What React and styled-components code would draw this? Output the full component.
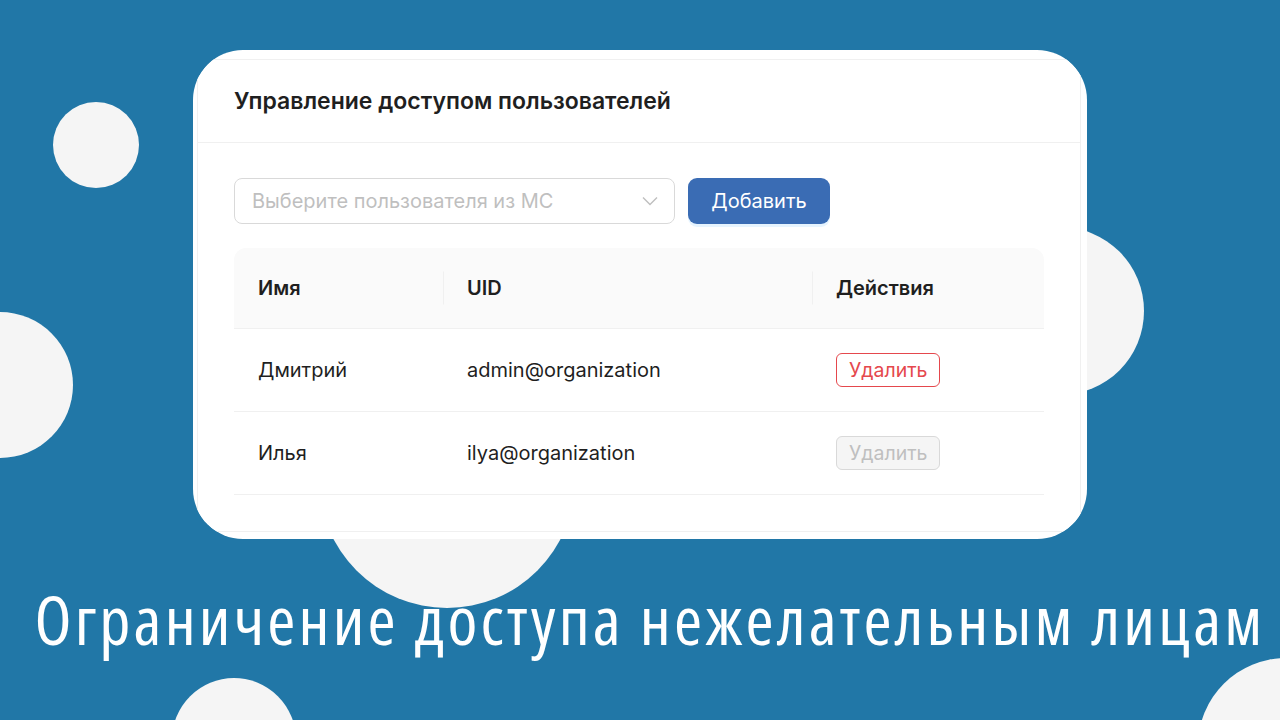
import React from "react";
import styled, { createGlobalStyle } from "styled-components";

const GlobalStyle = createGlobalStyle`
  html, body {
    margin: 0;
    padding: 0;
    background: #2177a7;
  }
  * {
    box-sizing: border-box;
  }
`;

const bubbles = [
  { x: 96, y: 145, r: 43 },
  { x: 0, y: 385, r: 73 },
  { x: 1060, y: 311, r: 84 },
  { x: 447, y: 480, r: 128 },
  { x: 234, y: 740, r: 62 },
  { x: 1286, y: 746, r: 88 },
];

const users = [
  { name: "Дмитрий", uid: "admin@organization", canDelete: true },
  { name: "Илья", uid: "ilya@organization", canDelete: false },
];

export default function App() {
  return (
    <>
      <GlobalStyle />
      <Page>
        {bubbles.map((b, i) => (
          <Bubble
            key={i}
            style={{
              left: b.x - b.r,
              top: b.y - b.r,
              width: b.r * 2,
              height: b.r * 2,
            }}
          />
        ))}

        <Frame>
          <Card>
            <CardHead>
              <CardTitle>Управление доступом пользователей</CardTitle>
            </CardHead>
            <CardBody>
              <Toolbar>
                <Select>
                  <Placeholder>Выберите пользователя из МС</Placeholder>
                  <svg width="16" height="10" viewBox="0 0 16 10">
                    <path
                      d="M1 1.5 L8 8.5 L15 1.5"
                      fill="none"
                      stroke="#bfbfbf"
                      strokeWidth="1.4"
                    />
                  </svg>
                </Select>
                <PrimaryButton>Добавить</PrimaryButton>
              </Toolbar>

              <Table>
                <HeadRow>
                  <HeadCell>Имя</HeadCell>
                  <HeadCell $divider>UID</HeadCell>
                  <HeadCell $divider>Действия</HeadCell>
                </HeadRow>
                {users.map((u) => (
                  <Row key={u.uid}>
                    <Cell>{u.name}</Cell>
                    <Cell>{u.uid}</Cell>
                    <Cell>
                      <DangerButton disabled={!u.canDelete}>Удалить</DangerButton>
                    </Cell>
                  </Row>
                ))}
              </Table>
            </CardBody>
          </Card>
        </Frame>

        <Caption>Ограничение доступа нежелательным лицам</Caption>
      </Page>
    </>
  );
}

const Page = styled.div`
  position: relative;
  width: 1280px;
  height: 720px;
  overflow: hidden;
  background: #2177a7;
  padding-top: 50px;
  font-family: Inter, "Noto Sans", sans-serif;
`;

const Bubble = styled.div`
  position: absolute;
  border-radius: 50%;
  background: #f5f5f5;
`;

const Frame = styled.div`
  position: relative;
  z-index: 1;
  margin-left: 193px;
  width: 894px;
  height: 489px;
  background: #fff;
  border-radius: 50px;
  overflow: hidden;
  padding: 9px 6px 7px 4px;
`;

const Card = styled.div`
  height: 100%;
  border: 1px solid #f0f0f0;
  border-radius: 12px;
  background: #fff;
`;

const CardHead = styled.div`
  height: 83px;
  display: flex;
  align-items: center;
  padding-left: 36px;
  border-bottom: 1px solid #f0f0f0;
`;

const CardTitle = styled.div`
  font-size: 23px;
  font-weight: 600;
  color: #1f1f1f;
`;

const CardBody = styled.div`
  padding: 35px 36px 0 36px;
`;

const Toolbar = styled.div`
  display: flex;
  align-items: center;
  gap: 13px;
`;

const Select = styled.div`
  width: 441px;
  height: 46px;
  border: 1px solid #d9d9d9;
  border-radius: 8px;
  display: flex;
  align-items: center;
  justify-content: space-between;
  padding: 0 16px 0 17px;
`;

const Placeholder = styled.span`
  font-size: 20px;
  color: #bfbfbf;
`;

const PrimaryButton = styled.button`
  width: 142px;
  height: 46px;
  border: none;
  border-radius: 9px;
  background: #3a6cb4;
  color: #fff;
  font-family: inherit;
  font-size: 20px;
  box-shadow: 0 3px 0 rgba(5, 145, 255, 0.1);
`;

const Table = styled.div`
  margin-top: 24px;
  width: 810px;
`;

const grid = `
  display: grid;
  grid-template-columns: 209px 369px 232px;
`;

const HeadRow = styled.div`
  ${grid}
  height: 81px;
  background: #fafafa;
  border-radius: 12px 12px 0 0;
  border-bottom: 1px solid #f0f0f0;
`;

const HeadCell = styled.div`
  position: relative;
  display: flex;
  align-items: center;
  padding-left: 24px;
  font-size: 20px;
  font-weight: 600;
  color: #1f1f1f;

  &::before {
    content: "";
    display: ${(p) => (p.$divider ? "block" : "none")};
    position: absolute;
    left: 0;
    top: 50%;
    width: 1px;
    height: 33px;
    transform: translateY(-50%);
    background: #f0f0f0;
  }
`;

const Row = styled.div`
  ${grid}
  height: 83px;
  border-bottom: 1px solid #f0f0f0;
`;

const Cell = styled.div`
  display: flex;
  align-items: center;
  padding-left: 24px;
  font-size: 20px;
  color: #1f1f1f;
`;

const DangerButton = styled.button`
  height: 34px;
  padding: 0 12px;
  border-radius: 6px;
  font-family: inherit;
  font-size: 19.5px;
  border: 1.4px solid ${(p) => (p.disabled ? "#d9d9d9" : "#e5484d")};
  background: ${(p) => (p.disabled ? "#f5f5f5" : "#fff")};
  color: ${(p) => (p.disabled ? "#bfbfbf" : "#e5484d")};
`;

const Caption = styled.div`
  position: relative;
  z-index: 1;
  margin-top: 46px;
  padding-left: 20px;
  text-align: center;
  white-space: nowrap;
  font-family: "Open Sans", "Noto Sans", sans-serif;
  font-size: 68px;
  font-stretch: 87.5%;
  letter-spacing: 3.2px;
  line-height: 1;
  color: #fff;
`;
